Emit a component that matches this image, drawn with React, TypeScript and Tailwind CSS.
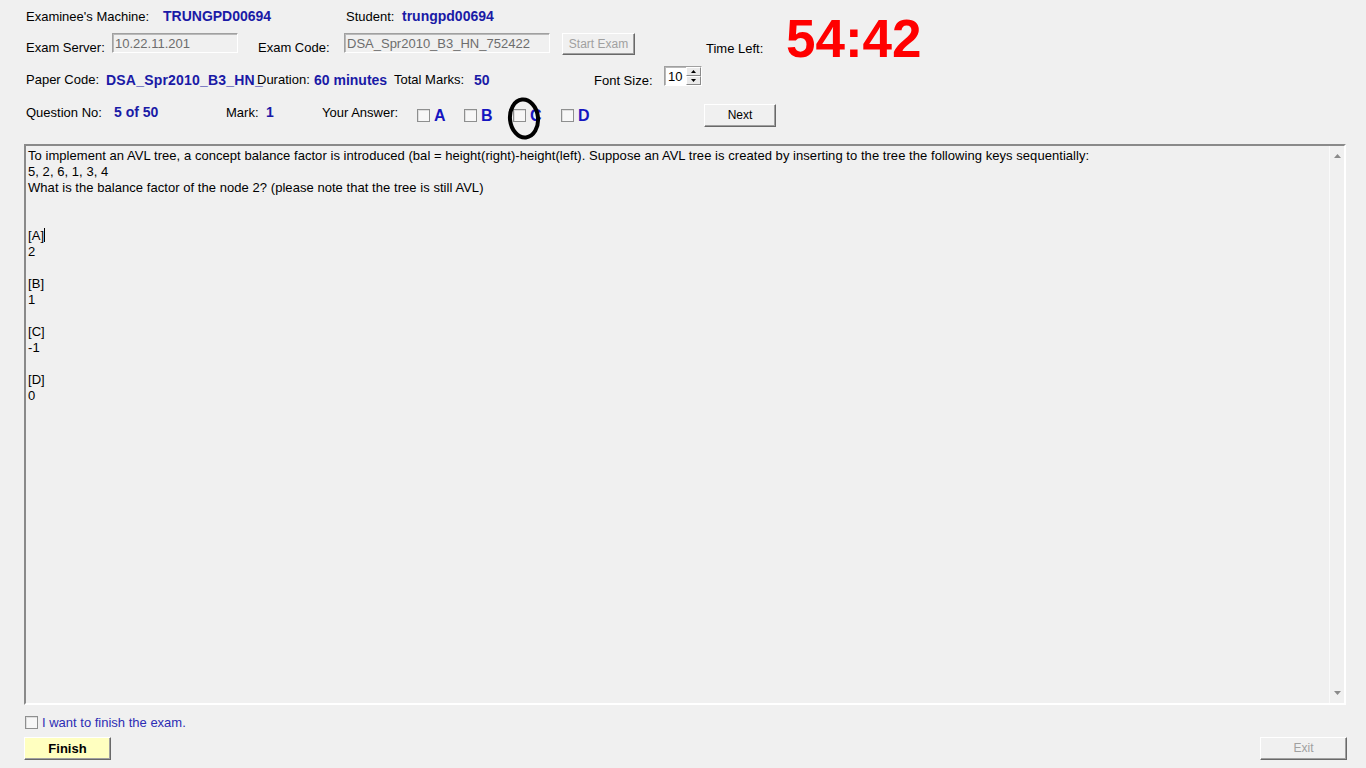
import React from "react";

const valueCls = "font-bold text-[14px] text-[#1a1aa6] whitespace-nowrap";

function Check() {
  return (
    <span className="inline-block w-[13px] h-[13px] shrink-0 border border-[#8e8f8f] bg-[#f7f7f7] shadow-[inset_1px_1px_0_#dedede]" />
  );
}

function Raised({ className = "", children }: { className?: string; children: React.ReactNode }) {
  return (
    <div
      className={
        "flex items-center justify-center border border-t-white border-l-white border-r-[#696969] border-b-[#696969] shadow-[inset_-1px_-1px_0_#a0a0a0] " +
        className
      }
    >
      {children}
    </div>
  );
}

function Sunken({ className = "", children }: { className?: string; children?: React.ReactNode }) {
  return (
    <div
      className={
        "flex items-center border border-t-[#a0a0a0] border-l-[#a0a0a0] border-r-white border-b-white shadow-[inset_1px_1px_0_#b9b9b9] " +
        className
      }
    >
      {children}
    </div>
  );
}

function Tri({ up }: { up?: boolean }) {
  return (
    <svg width="7" height="4" viewBox="0 0 7 4">
      {up ? <polygon points="0,4 7,4 3.5,0" fill="#8a8a8a" /> : <polygon points="0,0 7,0 3.5,4" fill="#8a8a8a" />}
    </svg>
  );
}

function Opt({ letter, w }: { letter: string; w: string }) {
  return (
    <div className={"flex items-start " + w}>
      <div className="mt-[13px]">
        <Check />
      </div>
      <span className="ml-[4px] mt-[11px] text-[16px] leading-[18px] font-bold text-[#1515c0]">{letter}</span>
    </div>
  );
}

export default function App() {
  const lines = [
    "To implement an AVL tree, a concept balance factor is introduced (bal = height(right)-height(left). Suppose an AVL tree is created by inserting to the tree the following keys sequentially:",
    "5, 2, 6, 1, 3, 4",
    "What is the balance factor of the node 2? (please note that the tree is still AVL)",
    "",
    "",
    "[A]",
    "2",
    "",
    "[B]",
    "1",
    "",
    "[C]",
    "-1",
    "",
    "[D]",
    "0",
  ];
  return (
    <div className="relative w-[1366px] h-[768px] overflow-hidden bg-[#f0f0f0] text-[13px] leading-[15px] text-black font-['Liberation_Sans',Arial,sans-serif]">
      <div className="flex">
        <div className="w-[786px] pl-[26px]">
          {/* Row 1 */}
          <div className="flex items-center h-[32px] whitespace-nowrap">
            <span className="w-[137px]">Examinee's Machine:</span>
            <span className={"w-[183px] " + valueCls}>TRUNGPD00694</span>
            <span className="w-[56px]">Student:</span>
            <span className={valueCls}>trungpd00694</span>
          </div>
          {/* Row 2 */}
          <div className="flex items-start h-[30px] whitespace-nowrap">
            <span className="w-[86px] mt-[8px]">Exam Server:</span>
            <Sunken className="w-[126px] h-[20px] mt-[1px] pl-[2px] text-[#6d6d6d]">10.22.11.201</Sunken>
            <span className="w-[86px] ml-[20px] mt-[8px]">Exam Code:</span>
            <Sunken className="w-[206px] h-[20px] mt-[1px] pl-[2px] text-[#6d6d6d]">DSA_Spr2010_B3_HN_752422</Sunken>
            <Raised className="w-[73px] h-[22px] ml-[12px] mt-[1px] text-[12px] text-[#a0a0a0]">Start Exam</Raised>
            <span className="ml-[71px] mt-[9px]">Time Left:</span>
          </div>
          {/* Row 3 */}
          <div className="flex items-start h-[34px] whitespace-nowrap">
            <span className="w-[80px] mt-[10px]">Paper Code:</span>
            <span className={"w-[151px] mt-[11px] overflow-visible tracking-[0.2px] " + valueCls}>DSA_Spr2010_B3_HN_</span>
            <span className="w-[57px] mt-[10px] relative">Duration:</span>
            <span className={"w-[80px] mt-[11px] " + valueCls}>60 minutes</span>
            <span className="w-[80px] mt-[10px]">Total Marks:</span>
            <span className={"w-[120px] mt-[11px] " + valueCls}>50</span>
            <span className="w-[70px] mt-[11px]">Font Size:</span>
            <Sunken className="w-[38px] h-[20px] mt-[4px] bg-white">
              <span className="flex-1 pl-[3px] text-[13px]">10</span>
              <div className="flex flex-col w-[15px] h-full">
                <div className="flex-1 flex items-center justify-center border border-t-white border-l-white border-r-[#8a8a8a] border-b-[#8a8a8a] bg-[#eaeaea]">
                  <svg width="5" height="3" viewBox="0 0 5 3">
                    <polygon points="0,3 5,3 2.5,0" fill="#000" />
                  </svg>
                </div>
                <div className="flex-1 flex items-center justify-center border border-t-white border-l-white border-r-[#8a8a8a] border-b-[#8a8a8a] bg-[#eaeaea]">
                  <svg width="5" height="3" viewBox="0 0 5 3">
                    <polygon points="0,0 5,0 2.5,3" fill="#000" />
                  </svg>
                </div>
              </div>
            </Sunken>
          </div>
          {/* Row 4 */}
          <div className="flex items-start h-[40px] whitespace-nowrap">
            <span className="w-[88px] mt-[9px]">Question No:</span>
            <span className={"w-[112px] mt-[9px] " + valueCls}>5 of 50</span>
            <span className="w-[40px] mt-[9px]">Mark:</span>
            <span className={"w-[56px] mt-[9px] " + valueCls}>1</span>
            <span className="w-[95px] mt-[9px]">Your Answer:</span>
            <Opt letter="A" w="w-[47px]" />
            <Opt letter="B" w="w-[49px]" />
            <Opt letter="C" w="w-[48px]" />
            <Opt letter="D" w="w-[143px]" />
            <Raised className="w-[72px] h-[23px] mt-[8px] text-[12px]">Next</Raised>
          </div>
        </div>
        <div className="pt-[12px] text-[53px] leading-[53px] font-bold text-[#ff0000] font-['Liberation_Sans',Arial,sans-serif]">
          54:42
        </div>
      </div>

      {/* Question text area */}
      <div className="mt-[8px] ml-[24px] w-[1322px] h-[561px] flex border-2 border-t-[#8a8a8a] border-l-[#8a8a8a] border-r-white border-b-white">
        <div className="flex-1 pl-[2px] pt-[2px] text-[13px] leading-[16px] tracking-[0.05px] text-black">
          {lines.map((l, i) => (
            <div key={i} className="h-[16px] whitespace-nowrap">
              {l}
              {l === "[A]" && <span className="inline-block w-[1px] h-[14px] bg-black align-[-2px]" />}
            </div>
          ))}
        </div>
        <div className="w-[15px] h-full flex flex-col items-center justify-between border-l border-[#fafafa] bg-[#f0f0f0] py-[8px]">
          <Tri up />
          <Tri />
        </div>
      </div>

      {/* Finish checkbox */}
      <div className="mt-[11px] ml-[25px] flex items-center h-[13px]">
        <Check />
        <span className="ml-[4px] text-[#2d2db4]">I want to finish the exam.</span>
      </div>

      {/* Buttons */}
      <div className="mt-[8px] flex justify-between pl-[24px] pr-[19px]">
        <Raised className="w-[87px] h-[23px] bg-[#ffffc0] font-bold text-[13px]">Finish</Raised>
        <Raised className="w-[87px] h-[23px] text-[12px] text-[#a0a0a0]">Exit</Raised>
      </div>

      {/* hand-drawn circle around C */}
      <svg className="absolute left-[504px] top-[95px]" width="42" height="48" viewBox="0 0 42 48">
        <ellipse cx="20" cy="23.5" rx="14" ry="19" fill="none" stroke="#000" strokeWidth="4" transform="rotate(-6 20 23.5)" />
      </svg>
    </div>
  );
}
